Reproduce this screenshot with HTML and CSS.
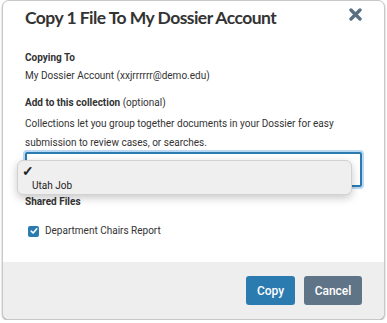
FILE: index.html
```html
<!DOCTYPE html>
<html lang="en">
<head>
    <meta charset="UTF-8">
    <meta name="viewport" content="width=device-width, initial-scale=1.0">
    <title>Copy To Dossier</title>
    <link rel="stylesheet" href="styles.css">
</head>
<body>
    <div class="modal">
        <div class="modal-header">
            <h1>Copy 1 File To My Dossier Account</h1>
            <button class="close-button" aria-label="Close">
                <svg width="13" height="13" viewBox="0 0 13 13">
                    <path d="M2 2 L11 11 M11 2 L2 11" stroke="#5b6f82" stroke-width="3.4" stroke-linecap="round"/>
                </svg>
            </button>
        </div>
        <div class="modal-body">
            <div class="label">Copying To</div>
            <div class="text">My Dossier Account (xxjrrrrrr@demo.edu)</div>

            <div class="label spaced">Add to this collection <span class="optional">(optional)</span></div>
            <div class="text help">Collections let you group together documents in your Dossier for easy submission to review cases, or searches.</div>

            <div class="select-wrap">
                <div class="select-box"></div>
                <div class="select-menu">
                    <div class="option checked">&#10003;</div>
                    <div class="option">Utah Job</div>
                </div>
            </div>

            <div class="label">Shared Files</div>
            <label class="file-row">
                <span class="checkbox">
                    <svg width="8" height="8" viewBox="0 0 8 8">
                        <path d="M1.2 4.2 L3.2 6 L6.8 1.8" fill="none" stroke="#fff" stroke-width="1.6" stroke-linecap="round" stroke-linejoin="round"/>
                    </svg>
                </span>
                Department Chairs Report
            </label>
        </div>
        <div class="modal-footer">
            <button class="btn btn-primary">Copy</button>
            <button class="btn btn-secondary">Cancel</button>
        </div>
    </div>
</body>
</html>
```

FILE: styles.css
```css
body {
    margin: 0;
    background: #fff;
    font-family: Roboto, "Liberation Sans", sans-serif;
    color: #333;
}

.modal {
    width: 381px;
    height: 318px;
    margin: 0 0 0 2px;
    background: #fff;
    border: 1px solid #c8c8c8;
    border-radius: 7px;
    box-shadow: 0 1px 2px rgba(0, 0, 0, 0.35);
    display: flex;
    flex-direction: column;
    overflow: hidden;
}

.modal-header {
    display: flex;
    justify-content: space-between;
    align-items: flex-start;
    padding: 4px 22px 0 22px;
}

.modal-header h1 {
    margin: 0;
    font-family: Lato, "Open Sans", sans-serif;
    font-weight: 700;
    font-size: 17.5px;
    letter-spacing: -0.55px;
    line-height: 26px;
    color: #333;
}

.close-button {
    background: transparent;
    border: none;
    padding: 0;
    margin-top: 3px;
    cursor: pointer;
    line-height: 0;
}

.modal-body {
    flex: 1;
    padding: 18px 22px 0 22px;
    font-size: 10px;
}

.label {
    font-weight: 700;
    line-height: 18px;
}

.label.spaced {
    margin-top: 9px;
}

.optional {
    font-weight: 400;
}

.text {
    line-height: 18px;
}

.help {
    margin-top: 2px;
    line-height: 19px;
}

.select-wrap {
    position: relative;
    margin: 0 0 6px 0;
}

.select-box {
    height: 31px;
    border: 2px solid #2b7bb0;
    border-radius: 2px;
    box-shadow: 0 0 0 2px #b9d8f4;
}

.select-menu {
    position: absolute;
    top: 8px;
    left: -8px;
    width: 325px;
    padding: 3px 4px 0 4px;
    height: 30px;
    background: #efefef;
    border: 1px solid #d2d2d2;
    border-radius: 6px;
    box-shadow: 0 3px 8px rgba(0, 0, 0, 0.22);
    font-size: 10px;
    color: #222;
}

.option {
    line-height: 16px;
    padding-left: 10px;
}

.option.checked {
    padding-left: 0;
    font-size: 14px;
    font-weight: 700;
    line-height: 14px;
}

.file-row {
    display: flex;
    align-items: center;
    gap: 6px;
    margin-top: 12px;
    padding-left: 3px;
    line-height: 16px;
}

.checkbox {
    width: 11px;
    height: 11px;
    background: #2b7bb0;
    border-radius: 2px;
    display: flex;
    justify-content: center;
    align-items: center;
}

.modal-footer {
    height: 57px;
    background: #eee;
    display: flex;
    justify-content: flex-end;
    align-items: center;
    gap: 9px;
    padding: 0 22px;
}

.btn {
    height: 29px;
    border: none;
    border-radius: 3px;
    color: #fff;
    font-family: Roboto, "Liberation Sans", sans-serif;
    font-size: 12px;
    font-weight: 500;
    cursor: pointer;
}

.btn-primary {
    width: 49px;
    background: #2b7bb0;
}

.btn-secondary {
    width: 58px;
    background: #607487;
}
```
